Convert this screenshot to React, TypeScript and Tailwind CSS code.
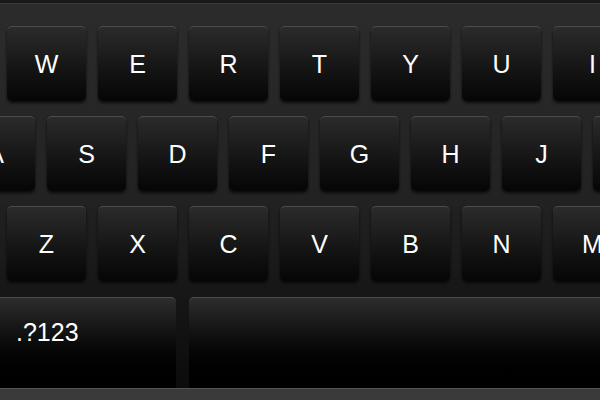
const rows = [
  { keys: ['', 'W', 'E', 'R', 'T', 'Y', 'U', 'I'], offset: 'ml-[-84px]' },
  { keys: ['A', 'S', 'D', 'F', 'G', 'H', 'J', ''], offset: 'ml-[-44px]' },
  { keys: ['', 'Z', 'X', 'C', 'V', 'B', 'N', 'M'], offset: 'ml-[-84px]' },
]

const keyClass =
  'shrink-0 rounded-[5px] border-t border-[#4c4c4c] bg-gradient-to-b from-[#2b2b2b] to-[#060606] shadow-[0_2px_3px_rgba(0,0,0,0.7)] text-white'

const Key = ({ label }: { label: string }) => (
  <div className={`${keyClass} w-[79px] h-[75px] flex items-center justify-center text-[25px] leading-none`}>
    {label}
  </div>
)

const App = () => {
  return (
    <div
      className="w-[600px] h-[400px] overflow-hidden flex flex-col bg-gradient-to-b from-[#2c2c2c] via-[#222222] to-[#0a0a0a]"
      style={{ fontFamily: '"Liberation Sans", Arial, sans-serif' }}
    >
      {/* top edge */}
      <div className="h-[4px] bg-[#181818] border-b border-[#3a3a3a] shrink-0" />

      <div className="flex flex-col gap-[15px] pt-[22px]">
        {rows.map((row, i) => (
          <div key={i} className={`flex gap-[12px] ${row.offset}`}>
            {row.keys.map((k, j) => (
              <Key key={j} label={k} />
            ))}
          </div>
        ))}
      </div>

      {/* bottom row */}
      <div className="flex gap-[13px] mt-[16px] ml-[-6px] h-[91px] shrink-0">
        <div className={`${keyClass} w-[182px] h-full rounded-b-none shadow-none from-[#2d2d2d] to-black pt-[16px] pl-[22px] text-[25px]`}>
          .?123
        </div>
        <div className={`${keyClass} w-[420px] h-full rounded-b-none shadow-none from-[#2d2d2d] to-black`} />
      </div>

      {/* bottom bar */}
      <div className="flex-1 bg-[#3a3a3a] border-t border-[#555555]" />
    </div>
  )
}

export default App
